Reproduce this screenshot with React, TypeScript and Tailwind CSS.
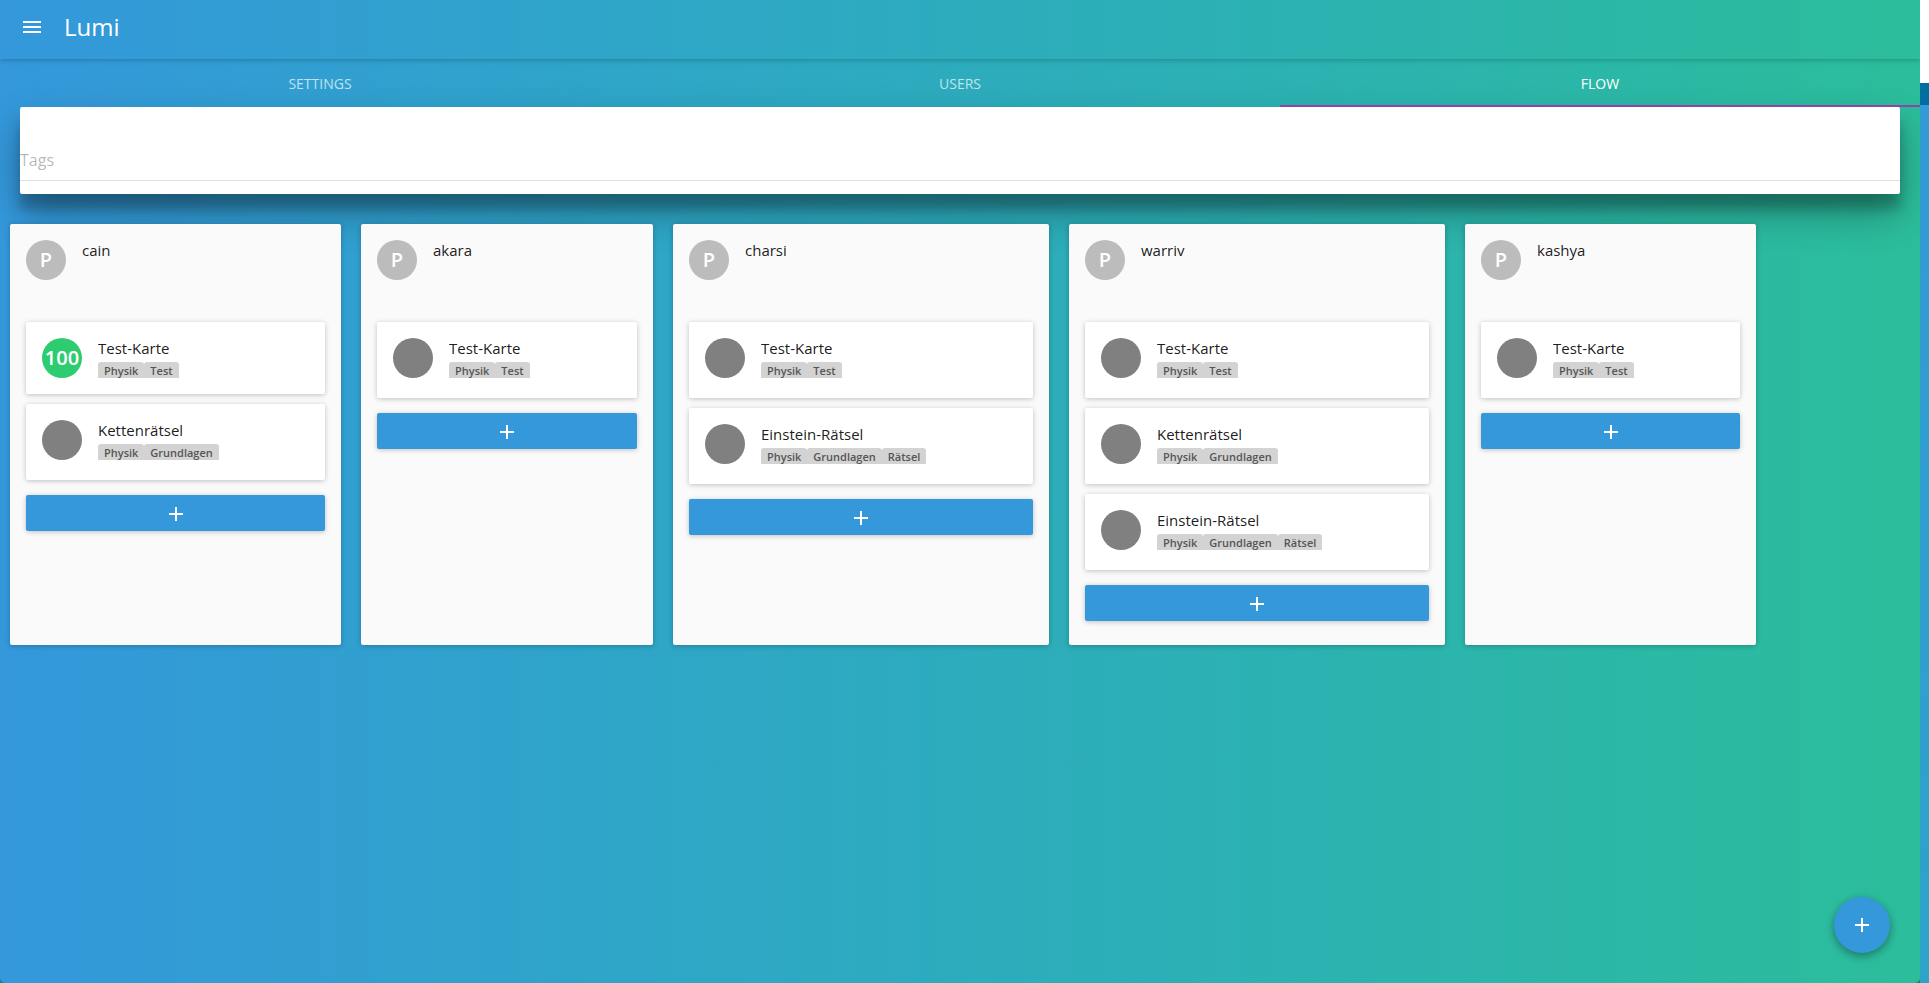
import type { ReactNode } from "react";

type Card = { title: string; tags: string[]; score?: string };
type Column = { name: string; width: string; cards: Card[] };

const test: Card = { title: "Test-Karte", tags: ["Physik", "Test"] };
const chain: Card = { title: "Kettenrätsel", tags: ["Physik", "Grundlagen"] };
const einstein: Card = { title: "Einstein-Rätsel", tags: ["Physik", "Grundlagen", "Rätsel"] };

const columns: Column[] = [
  { name: "cain", width: "w-[331px]", cards: [{ ...test, score: "100" }, chain] },
  { name: "akara", width: "w-[292px]", cards: [test] },
  { name: "charsi", width: "w-[376px]", cards: [test, einstein] },
  { name: "warriv", width: "w-[376px]", cards: [test, chain, einstein] },
  { name: "kashya", width: "w-[291px]", cards: [test] },
];

const tabs = ["Settings", "Users", "Flow"];

const paper = "rounded-xs shadow-[0_1px_6px_rgba(0,0,0,0.12),0_1px_4px_rgba(0,0,0,0.12)]";

function PlusIcon() {
  return (
    <svg viewBox="0 0 24 24" className="size-6 fill-white" aria-hidden="true">
      <path d="M19 13h-6v6h-2v-6H5v-2h6V5h2v6h6v2z" />
    </svg>
  );
}

function Avatar({ color, children }: { color: string; children?: ReactNode }) {
  return (
    <div className={`flex size-10 shrink-0 items-center justify-center rounded-full text-xl font-semibold text-white ${color}`}>
      {children}
    </div>
  );
}

function TaskCard({ card }: { card: Card }) {
  return (
    <article className={`flex gap-4 bg-white px-4 pt-4 ${card.score ? "pb-4" : "pb-5"} ${paper}`}>
      <Avatar color={card.score ? "bg-[#2ecc71]" : "bg-[#808080]"}>{card.score}</Avatar>
      <div className="h-10 overflow-hidden">
        <h3 className="pb-1 text-[15px] leading-5 text-black/90">{card.title}</h3>
        <ul className="flex">
          {card.tags.map((tag) => (
            <li key={tag} className="h-5 rounded-[3px] bg-[#d3d3d3] px-1.5 text-[11px] leading-[18px] font-semibold text-[#555555]">
              {tag}
            </li>
          ))}
        </ul>
      </div>
    </article>
  );
}

function BoardColumn({ column }: { column: Column }) {
  return (
    <section className={`shrink-0 bg-[#fafafa] px-4 pt-4 pb-6 ${paper} ${column.width}`}>
      <header className="flex h-[82px] gap-4">
        <Avatar color="bg-[#bcbcbc]">P</Avatar>
        <h2 className="text-[15px] leading-5 text-black/90">{column.name}</h2>
      </header>
      <div className="flex flex-col gap-2.5">
        {column.cards.map((card) => (
          <TaskCard key={card.title} card={card} />
        ))}
      </div>
      <button type="button" aria-label={`Add card to ${column.name}`} className={`mt-[15px] flex h-9 w-full items-center justify-center bg-[#3498db] pt-0.5 ${paper}`}>
        <PlusIcon />
      </button>
    </section>
  );
}

export default function App() {
  return (
    <div className="flex min-h-screen bg-white font-['Open_Sans',sans-serif]">
      <div className="flex min-w-0 flex-1 bg-[#1f7a7c]">
        <div className="min-w-0 flex-1 rounded-b-[5px] bg-linear-to-r from-[#3498db] to-[#2cbd9b]">
          <header className="flex h-[59px] items-center gap-4 px-5 pb-1.5 shadow-[0_1px_6px_rgba(0,0,0,0.12),0_1px_4px_rgba(0,0,0,0.12)]">
            <button type="button" aria-label="Open menu">
              <svg viewBox="0 0 24 24" className="size-6 fill-white" aria-hidden="true">
                <path d="M3 18h18v-2H3v2zm0-5h18v-2H3v2zm0-7v2h18V6H3z" />
              </svg>
            </button>
            <h1 className="px-1 text-2xl font-medium text-white">Lumi</h1>
          </header>
          <nav className="grid h-12 grid-cols-3">
            {tabs.map((tab) => (
              <button
                key={tab}
                type="button"
                className={`border-b-2 pt-1 text-sm font-medium uppercase ${tab === "Flow" ? "border-[#8e44ad] text-white" : "border-transparent text-white/70"}`}
              >
                {tab}
              </button>
            ))}
          </nav>
          <main>
            <div className="mx-5 h-[87px] rounded-xs bg-white pt-8 shadow-[0_19px_38px_rgba(0,0,0,0.3),0_15px_12px_rgba(0,0,0,0.22)]">
              <input
                type="text"
                aria-label="Tags"
                placeholder="Tags"
                className="block h-[42px] w-full border-b border-[#e0e0e0] text-base outline-none placeholder:text-black/30"
              />
            </div>
            <div className="mt-[30px] flex gap-5 px-2.5">
              {columns.map((column) => (
                <BoardColumn key={column.name} column={column} />
              ))}
            </div>
          </main>
          <button
            type="button"
            aria-label="Add"
            className="fixed right-[39px] bottom-[30px] flex size-14 items-center justify-center rounded-full bg-[#3498db] shadow-[0_3px_10px_rgba(0,0,0,0.16),0_3px_10px_rgba(0,0,0,0.23)]"
          >
            <PlusIcon />
          </button>
        </div>
      </div>
      <aside className="flex w-[9px] shrink-0 flex-col">
        <div className="h-[83px] bg-white" />
        <div className="h-[22px] bg-[#006ea1]" />
        <div className="flex-1 bg-linear-to-b from-[#329bd5] to-[#2ca4c8]" />
      </aside>
    </div>
  );
}
